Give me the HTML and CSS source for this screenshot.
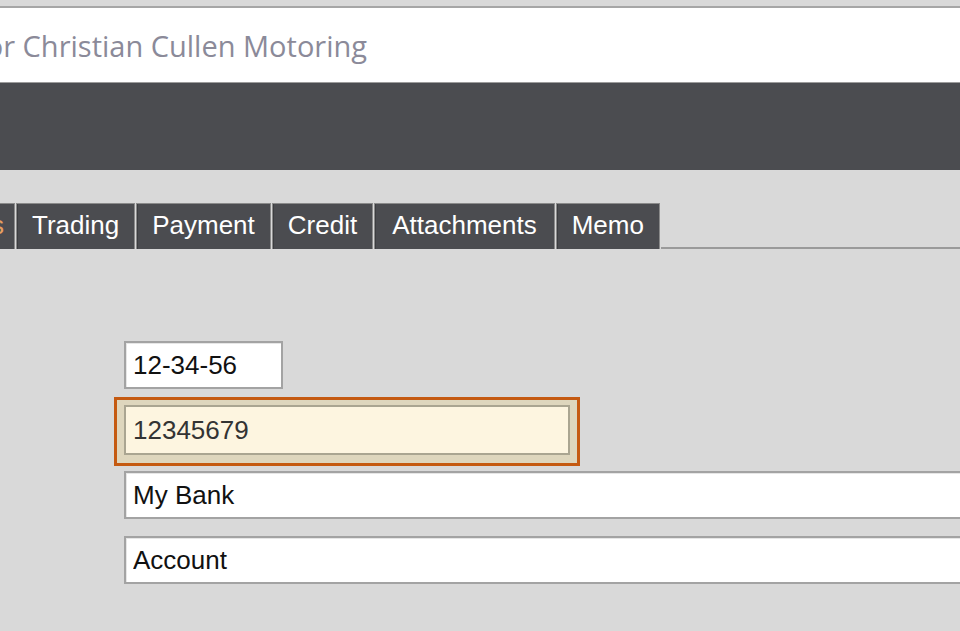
FILE: index.html
```html
<!DOCTYPE html>
<html lang="en">
<head>
  <meta charset="UTF-8" />
  <title>Supplier - Christian Cullen Motoring</title>
  <link rel="stylesheet" href="styles.css">
</head>
<body>
  <div class="window">
    <div class="title-bar">
      <span class="title-text">for Christian Cullen Motoring</span>
    </div>
    <div class="toolbar"></div>

    <div class="content">
      <div class="tabs">
        <div class="tab active">Details</div>
        <div class="tab">Trading</div>
        <div class="tab">Payment</div>
        <div class="tab">Credit</div>
        <div class="tab wide">Attachments</div>
        <div class="tab">Memo</div>
        <div class="tab-fill"></div>
      </div>

      <div class="form">
        <input class="field sort-code" type="text" value="12-34-56">
        <div class="highlight">
          <input class="field account-no" type="text" value="12345679">
        </div>
        <input class="field bank-name" type="text" value="My Bank">
        <input class="field account-name" type="text" value="Account">
      </div>
    </div>
  </div>
</body>
</html>
```

FILE: styles.css
```css
body {
  margin: 0;
  padding: 0;
  background-color: #d9d9d9;
  font-family: 'Liberation Sans', Arial, sans-serif;
  overflow: hidden;
}

.window {
  width: 960px;
  height: 631px;
  overflow: hidden;
}

.title-bar {
  background-color: #fff;
  margin-top: 6px;
  border-top: 2px solid #a6a6a6;
  border-bottom: 1px solid #9c9c9c;
  height: 74px;
  display: flex;
  align-items: center;
}

.title-text {
  font-family: 'Open Sans', 'Noto Sans', sans-serif;
  font-size: 29px;
  color: #8b8a99;
  margin-left: -24px;
  white-space: nowrap;
}

.toolbar {
  background-color: #4b4c50;
  height: 87px;
}

.content {
  padding-top: 33px;
}

/* tab strip */
.tabs {
  display: flex;
  height: 46px;
}

.tab {
  background-color: #4b4c50;
  color: #fff;
  font-size: 26px;
  line-height: 42px;
  padding: 0 15px;
  border: 1px solid #8a8a8a;
  border-bottom: none;
  margin-right: 1px;
  box-shadow: inset 1px 0 0 #3c3d40;
  white-space: nowrap;
}

.tab.wide {
  padding: 0 17px;
}

.tab.active {
  color: #e8a060;
  margin-left: -94px;
  width: 82px;
  overflow: hidden;
  text-align: right;
  padding-right: 10px;
}

.tab-fill {
  flex: 1;
  border-bottom: 2px solid #9a9a9a;
}

/* form fields */
.form {
  padding: 92px 0 0 124px;
  display: flex;
  flex-direction: column;
  align-items: flex-start;
}

.field {
  box-sizing: border-box;
  height: 48px;
  margin: 0;
  padding: 0 7px;
  font-family: 'Liberation Sans', Arial, sans-serif;
  font-size: 26px;
  color: #111;
  background-color: #fff;
  border: 2px solid #a3a3a3;
  box-shadow: inset 0 1px 0 #e6e6e6, inset 1px 0 0 #e6e6e6;
  outline: none;
}

.sort-code {
  width: 159px;
}

.highlight {
  margin: 8px 0 0 -10px;
  border: 3px solid #c55a11;
  background-color: #ded6bd;
  padding: 5px 7px 8px 7px;
}

.account-no {
  width: 446px;
  height: 50px;
  background-color: #fdf5e0;
  border-color: #aaa591;
  box-shadow: none;
  color: #333;
}

.bank-name,
.account-name {
  width: 900px;
}

.bank-name {
  margin-top: 5px;
}

.account-name {
  margin-top: 17px;
}
```
